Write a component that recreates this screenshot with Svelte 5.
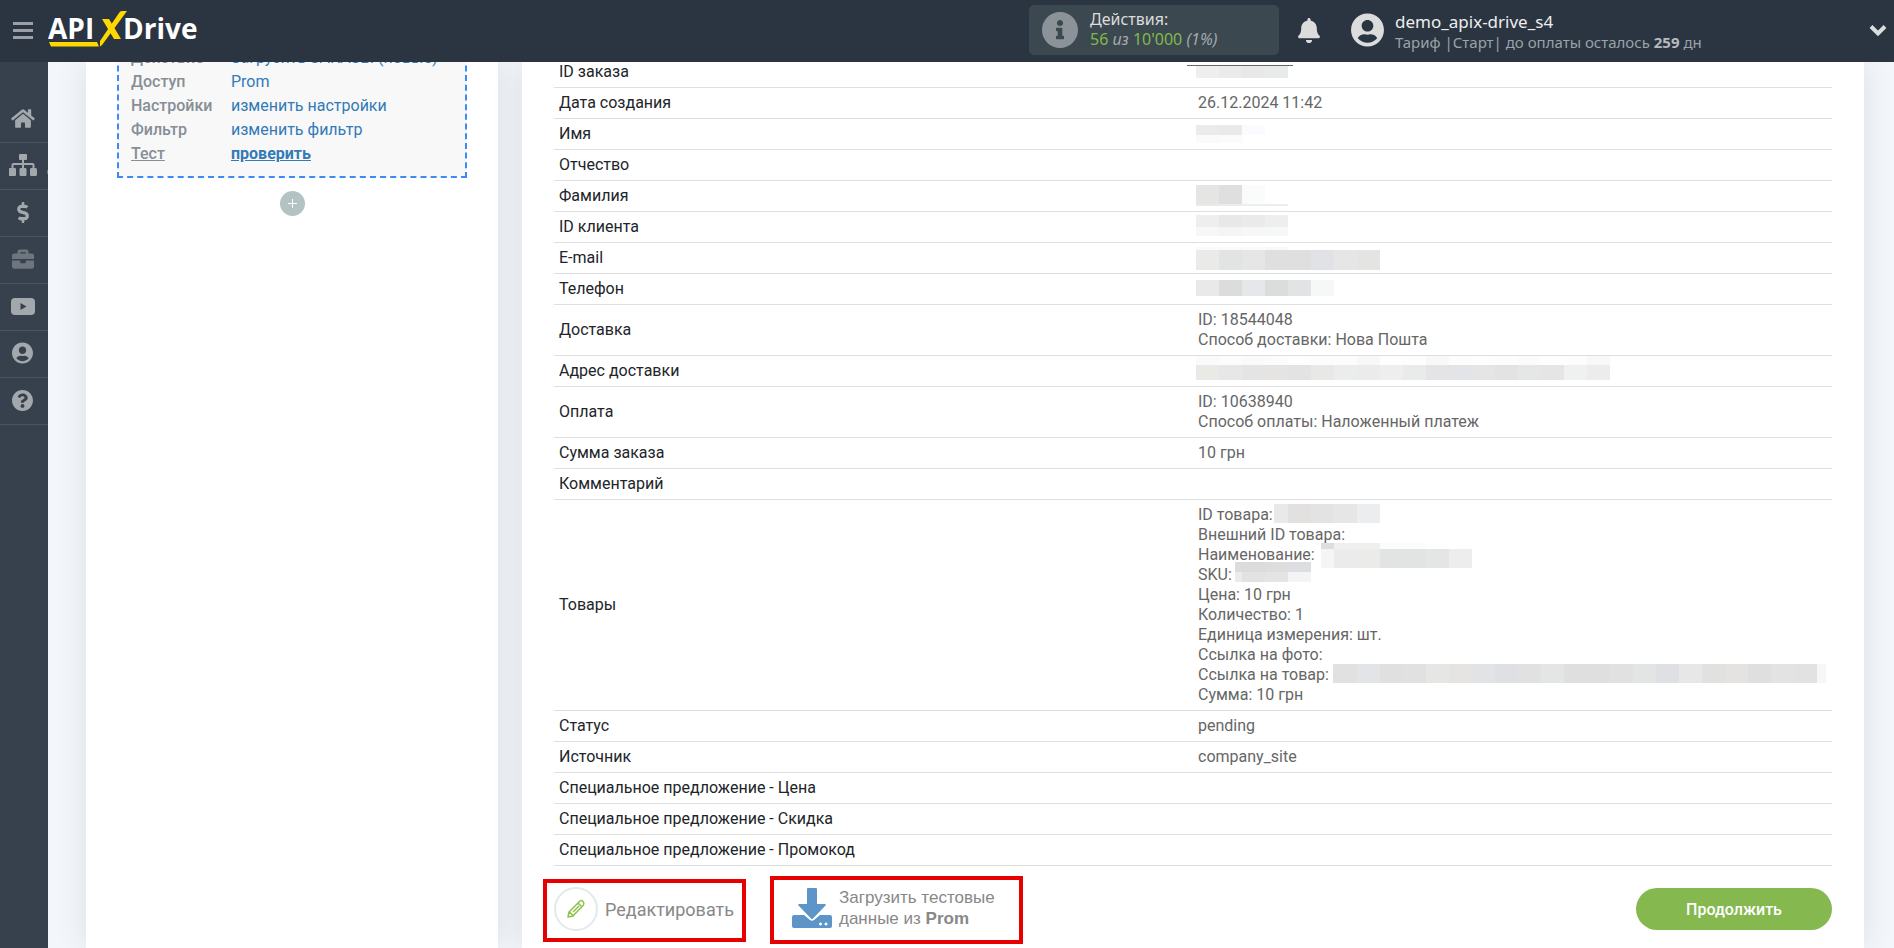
<script>
	const menu = [
		{ title: 'Главная', icon: 'home', w: 24, h: 21 },
		{ title: 'Связи', icon: 'sitemap', w: 28, h: 22, more: true },
		{ title: 'Оплата', icon: 'dollar', w: 12, h: 21 },
		{ title: 'Проекты', icon: 'case', w: 22, h: 22, muted: true },
		{ title: 'Видео', icon: 'video', w: 24, h: 17 },
		{ title: 'Профиль', icon: 'user', w: 21, h: 22 },
		{ title: 'Помощь', icon: 'help', w: 21, h: 21 },
	];

	const icons = {
		home: { box: '0 0 576 512', d: 'M280.37 148.26L96 300.11V464a16 16 0 0 0 16 16l112.06-.29a16 16 0 0 0 15.92-16V368a16 16 0 0 1 16-16h64a16 16 0 0 1 16 16v95.64a16 16 0 0 0 16 16.05L464 480a16 16 0 0 0 16-16V300L295.67 148.26a12.19 12.19 0 0 0-15.3 0zM571.6 251.47L488 182.56V44.05a12 12 0 0 0-12-12h-56a12 12 0 0 0-12 12v72.61L318.47 43a48 48 0 0 0-61 0L4.34 251.47a12 12 0 0 0-1.6 16.9l25.5 31A12 12 0 0 0 45.15 301l235.22-193.74a12.19 12.19 0 0 1 15.3 0L530.9 301a12 12 0 0 0 16.9-1.6l25.5-31a12 12 0 0 0-1.7-16.93z' },
		sitemap: { box: '0 0 28 22', d: 'M11 0h6q1 0 1 1v4q0 1-1 1h-2v3h8.500q2 0 2 2v3h1q1.500 0 1.500 1.500v5q0 1.500-1.500 1.500h-4.500q-1 0-1-1.500v-5q0-1.500 1-1.500h1.500v-3h-8.500v3h1.500q1 0 1 1.500v5q0 1.500-1 1.500h-5q-1 0-1-1.500v-5q0-1.500 1-1.500h1.500v-3h-8.500v3h1.500q1 0 1 1.500v5q0 1.500-1 1.500h-5q-1.500 0-1.500-1.500v-5q0-1.500 1.500-1.500h1.500v-3q0-2 2-2h8.500v-3h-2q-1 0-1-1v-4q0-1 1-1z' },
		dollar: { box: '0 0 288 512', d: 'M209.2 233.4l-108-31.6C88.7 198.2 80 186.5 80 173.5c0-16.3 13.2-29.5 29.5-29.5h66.3c12.2 0 24.2 3.7 34.2 10.5 6.1 4.1 14.3 3.1 19.5-2l34.8-34c7.1-6.9 6.1-18.4-1.8-24.5C238 74.8 207.400 64.100 176 64V16c0-8.800-7.200-16-16-16h-32c-8.800 0-16 7.200-16 16v48h-2.500C45.800 64-5.400 118.700.500 183.600c4.200 46.100 39.400 83.600 83.800 96.600l102.500 30c12.500 3.700 21.200 15.300 21.200 28.300 0 16.300-13.200 29.500-29.500 29.500h-66.300C100 368 88 364.300 78 357.500c-6.100-4.100-14.300-3.100-19.500 2l-34.800 34c-7.100 6.900-6.100 18.400 1.800 24.500 24.500 19.200 55.100 29.900 86.500 30v48c0 8.800 7.200 16 16 16h32c8.800 0 16-7.200 16-16v-48.200c46.600-.9 90.300-28.600 105.700-72.700 21.500-61.600-14.600-124.800-72.500-141.700z' },
		case: { box: '0 0 512 512', d: 'M320 336c0 8.840-7.160 16-16 16h-96c-8.840 0-16-7.160-16-16v-48H0v144c0 25.600 22.400 48 48 48h416c25.600 0 48-22.400 48-48V288H320v48zm144-208h-80V80c0-25.600-22.400-48-48-48H176c-25.600 0-48 22.400-48 48v48H48c-25.600 0-48 22.400-48 48v80h512v-80c0-25.600-22.400-48-48-48zm-144 0H192V96h128v32z' },
		video: { box: '0 0 24 17', d: 'M4 0h16q4 0 4 4v9q0 4-4 4H4q-4 0-4-4V4q0-4 4-4zM9.500 5v7l6-3.500z' },
		user: { box: '0 0 496 512', d: 'M248 8C111 8 0 119 0 256s111 248 248 248 248-111 248-248S385 8 248 8zm0 96c48.600 0 88 39.400 88 88s-39.400 88-88 88-88-39.400-88-88 39.400-88 88-88zm0 344c-58.700 0-111.300-26.600-146.500-68.200 18.800-35.400 55.600-59.800 98.500-59.800 2.400 0 4.800.4 7.100 1.100 13 4.200 26.600 6.900 40.900 6.900 14.300 0 28-2.700 40.900-6.900 2.300-.7 4.700-1.100 7.100-1.100 42.900 0 79.700 24.400 98.500 59.800C359.300 421.400 306.700 448 248 448z' },
		help: { box: '8 8 496 496', d: 'M504 256c0 136.997-111.043 248-248 248S8 392.997 8 256C8 119.083 119.043 8 256 8s248 111.083 248 248zM262.655 90c-54.497 0-89.255 22.957-116.549 63.758-3.536 5.286-2.353 12.415 2.715 16.258l34.699 26.310c5.205 3.947 12.621 3.008 16.665-2.122 17.864-22.658 30.113-35.797 57.303-35.797 20.429 0 45.698 13.148 45.698 32.958 0 14.976-12.363 22.667-32.534 33.976C247.128 238.528 216 254.941 216 296v4c0 6.627 5.373 12 12 12h56c6.627 0 12-5.373 12-12v-1.333c0-28.462 83.186-29.647 83.186-106.667 0-58.002-60.165-102-116.531-102zM256 338c-25.365 0-46 20.635-46 46 0 25.364 20.635 46 46 46s46-20.636 46-46c0-25.365-20.635-46-46-46z' },
		info: { box: '8 8 496 496', d: 'M256 8C119.043 8 8 119.083 8 256c0 136.997 111.043 248 248 248s248-111.003 248-248C504 119.083 392.957 8 256 8zm0 110c23.196 0 42 18.804 42 42s-18.804 42-42 42-42-18.804-42-42 18.804-42 42-42zm56 254c0 6.627-5.373 12-12 12h-88c-6.627 0-12-5.373-12-12v-24c0-6.627 5.373-12 12-12h12v-64h-12c-6.627 0-12-5.373-12-12v-24c0-6.627 5.373-12 12-12h64c6.627 0 12 5.373 12 12v100h12c6.627 0 12 5.373 12 12v24z' },
		bell: { box: '0 0 448 512', d: 'M224 512c35.320 0 63.970-28.650 63.970-64H160.030c0 35.350 28.650 64 63.970 64zm215.390-149.710c-19.320-20.760-55.470-51.990-55.470-154.290 0-77.700-54.480-139.900-127.940-155.160V32c0-17.670-14.320-32-31.980-32s-31.980 14.330-31.980 32v20.840C118.560 68.100 64.080 130.300 64.080 208c0 102.300-36.150 133.530-55.470 154.290-6 6.450-8.660 14.160-8.610 21.710.11 16.400 12.980 32 32.100 32h383.800c19.120 0 32-15.600 32.100-32 .05-7.550-2.610-15.270-8.610-21.710z' },
	};

	const steps = [
		{ name: 'Действие', link: 'Загрузить ЗАКАЗЫ (новые)' },
		{ name: 'Доступ', link: 'Prom' },
		{ name: 'Настройки', link: 'изменить настройки' },
		{ name: 'Фильтр', link: 'изменить фильтр' },
		{ name: 'Тест', link: 'проверить', active: true },
	];

	// hidden values: strips of coloured cells laid over the table cell,
	// a cell is 23px wide unless the strip gives its own first width
	const CELL = 23;

	const rows = [
		{ name: 'ID заказа', hidden: [
			{ x: -6, y: 8, h: 1, first: 106, cells: ['#5d6870'] },
			{ x: 3, y: 9, h: 12, cells: ['#eeeeee', '#ebebe9', '#e8e8e8', '#e9ebea'] },
		] },
		{ name: 'Дата создания', lines: ['26.12.2024 11:42'] },
		{ name: 'Имя', hidden: [
			{ x: 3, y: 6, h: 10, cells: ['#ebebeb', '#e9ebea', '#fafbfe'] },
			{ x: 3, y: 16, h: 8, cells: ['#fafafa', '#fbfbfb'] },
		] },
		{ name: 'Отчество' },
		{ name: 'Фамилия', hidden: [
			{ x: 3, y: 4, h: 19, cells: ['#e5e5e3', '#dfdfdf', '#fafcfb'] },
			{ x: 3, y: 23, h: 2, cells: ['#e9e9e9', '#ececec', '#eeeeee', '#ededed'] },
		] },
		{ name: 'ID клиента', hidden: [
			{ x: 3, y: 3, h: 12, cells: ['#eeeeee', '#e7e9e8', '#eaeaea', '#eeeeee'] },
			{ x: 3, y: 15, h: 9, cells: ['#f7f7f7', '#f5f5f5', '#f7f7f7', '#f6f8f7'] },
		] },
		{ name: 'E-mail', hidden: [
			{ x: 3, y: 4, h: 3, cells: ['#fafafa', '#fafafa', '#fafafa', '#f9f9f9'] },
			{ x: 3, y: 7, h: 20, cells: ['#eaeae8', '#e2e4e3', '#e6e6e6', '#dfdfdf', '#dfdfdf', '#e0e2e5', '#e6e6e6', '#e4e4e2'] },
		] },
		{ name: 'Телефон', hidden: [
			{ x: 3, y: 6, h: 16, cells: ['#e9e9e9', '#dbdddc', '#e5e7ea', '#dbdddc', '#e1e3e5', '#f6f8f7'] },
		] },
		{ name: 'Доставка', lines: ['ID: 18544048', 'Способ доставки: Нова Пошта'] },
		{ name: 'Адрес доставки', hidden: [
			{ x: 3, y: 0, h: 9, cells: ['#fafafa', '#fcfcfc', '#fafafa', '#fcfcfc', '#fefefe', '#fcfcfc', '#fcfcfc', '#f8f8f8', '#fefefe', '#fdfdfd', '#f8f8f8', '#fdfdfd', '#fefefe', '#fdfdfd', '#fbfbfb', '#fefefe', '#fdfdfd', '#f8f8f8'] },
			{ x: 3, y: 9, h: 15, cells: ['#e9e9e6', '#e7e7e7', '#e4e4e4', '#e5e4e2', '#e3e3e3', '#e8e8e6', '#ebedec', '#ebebeb', '#eeeeee', '#e9ebea', '#e4e4e6', '#e3e4e8', '#e5e5e5', '#e3e3e3', '#e5e7e6', '#e5e5e5', '#eff1f0', '#ececec'] },
		] },
		{ name: 'Оплата', lines: ['ID: 10638940', 'Способ оплаты: Наложенный платеж'] },
		{ name: 'Сумма заказа', lines: ['10 грн'] },
		{ name: 'Комментарий' },
		{
			name: 'Товары',
			lines: ['ID товара:', 'Внешний ID товара:', 'Наименование:', 'SKU:', 'Цена: 10 грн', 'Количество: 1', 'Единица измерения: шт.', 'Ссылка на фото:', 'Ссылка на товар:', 'Сумма: 10 грн'],
			hidden: [
				{ x: 81, y: 4, h: 19, first: 14, cells: ['#e9e9ea', '#e2e1df', '#e3e3e3', '#e6e6e6', '#ecedef'] },
				{ x: 128, y: 43, h: 6, first: 13, cells: ['#dcdfde', '#eef0ef', '#eef0ef', '#fcfcfc', '#fcfcfc'] },
				{ x: 128, y: 49, h: 19, first: 13, cells: ['#f5f5f5', '#ebebeb', '#ebebe9', '#e2e4e3', '#e2e4e3', '#e4e6e5', '#ededed'] },
				{ x: 42, y: 62, h: 10, first: 7, cells: ['#dcdcdc', '#dbdbdc', '#dddddd', '#dddee1'] },
				{ x: 42, y: 72, h: 10, first: 7, cells: ['#ebebeb', '#e2e2e2', '#e4e4e4', '#f4f4f4'] },
				{ x: 140, y: 164, h: 19, first: 24, cells: ['#e1e1df', '#e2e4e7', '#e0e0e0', '#e1e1e1', '#e6e6e4', '#e5e4e2', '#e2e3e5', '#dee0e3', '#e1e1e2', '#e3e6e5', '#dfdfdf', '#dfdfdf', '#e1e1e1', '#e3e5e5', '#dee0e3', '#e7e7e7', '#e1e1df', '#e4e3e1', '#dfdfdf', '#e3e3e4', '#e2e2e2'] },
				{ x: 624, y: 164, h: 19, first: 9, cells: ['#f5f6f8'] },
			],
		},
		{ name: 'Статус', lines: ['pending'] },
		{ name: 'Источник', lines: ['company_site'] },
		{ name: 'Специальное предложение - Цена' },
		{ name: 'Специальное предложение - Скидка' },
		{ name: 'Специальное предложение - Промокод' },
	];
</script>

{#snippet icon(name, w, h)}
	<svg width={w} height={h} viewBox={icons[name].box} fill="currentColor" fill-rule="evenodd" aria-hidden="true">
		<path d={icons[name].d} />
	</svg>
{/snippet}

<div class="app">
	<header>
		<button class="burger" aria-label="Меню">
			<svg width="20" height="17" viewBox="0 0 20 17" fill="currentColor">
				<path d="M0 0h20v3H0zM0 7h20v3H0zM0 14h20v3H0z" />
			</svg>
		</button>
		<a class="logo" href="#home" aria-label="APIXDrive">
			<svg width="156" height="40" viewBox="0 0 156 40">
				<text x="0" y="29" class="logo-text">API</text>
				<text x="75" y="29" class="logo-text">Drive</text>
				<path d="M54 9h7l12 20h-7z" fill="#ffd800" />
				<path d="M71 3q1-2 3-2h5L54 35l-2 1.500V31z" fill="#ffd800" />
				<path d="M1 32h48l2 4.500H3z" fill="#ffd800" />
			</svg>
		</a>
		<div class="actions">
			{@render icon('info', 36, 36)}
			<div class="actions-text">
				<div>Действия:</div>
				<div class="actions-count"><b>56</b> <i>из</i> <b>10'000</b> <i>(1%)</i></div>
			</div>
		</div>
		<button class="bell" aria-label="Уведомления">{@render icon('bell', 22, 25)}</button>
		<div class="user">
			{@render icon('user', 33, 34)}
			<div class="user-text">
				<div class="user-name">demo_apix-drive_s4</div>
				<div class="user-plan">Тариф |Старт| до оплаты осталось <b>259</b> дн</div>
			</div>
		</div>
		<button class="chevron" aria-label="Открыть меню профиля">
			<svg width="18" height="13" viewBox="0 0 18 13" fill="none" stroke="currentColor" stroke-width="4">
				<path d="M2 2.500l7 7 7-7" />
			</svg>
		</button>
	</header>

	<div class="body">
		<nav>
			{#each menu as item}
				<a href="#{item.icon}" aria-label={item.title} class:muted={item.muted} class:more={item.more}>
					{@render icon(item.icon, item.w, item.h)}
				</a>
			{/each}
		</nav>

		<main>
			<section class="panel side">
				<div class="source">
					{#each steps as step}
						<div class="step" class:active={step.active}>
							<span class="step-name"><span>{step.name}</span></span>
							<a href="#step">{step.link}</a>
						</div>
					{/each}
				</div>
				<button class="plus" aria-label="Добавить">
					<svg width="9" height="9" viewBox="0 0 9 9" stroke="currentColor"><path d="M4.500 0v9M0 4.500h9" /></svg>
				</button>
			</section>

			<section class="panel order">
				<table>
					<tbody>
						{#each rows as row}
							<tr>
								<th scope="row">{row.name}</th>
								<td>
									{#each row.lines ?? [] as line}
										<div>{line}</div>
									{/each}
									{#each row.hidden ?? [] as strip}
										<div class="strip" style="left: {strip.x}px; top: {strip.y}px; height: {strip.h}px">
											{#each strip.cells as color, i}
												<i style="width: {i === 0 && strip.first ? strip.first : CELL}px; background: {color}"></i>
											{/each}
										</div>
									{/each}
								</td>
							</tr>
						{/each}
					</tbody>
				</table>

				<div class="footer">
					<button class="edit">
						<span class="round">
							<svg width="20" height="20" viewBox="0 0 20 20" fill="none" stroke="#8bc34a" stroke-width="1.500" stroke-linejoin="round">
								<path d="M2 18l1-5L14 2q1.500-1 3 .5t.5 3.500L7 17zM12 4l4 4M3.500 13l3.500 3.500M7 13l6-6" />
							</svg>
						</span>
						Редактировать
					</button>
					<button class="load">
						<svg width="40" height="40" viewBox="0 0 40 40" fill="#5e95c9">
							<path d="M16 0h8q1 0 1 1v15h8q1.500 0 .5 1.500L21 30.500q-1 1-2 0L6.500 17.500q-1-1.500.5-1.500h8V1q0-1 1-1z" />
							<path fill-rule="evenodd" d="M2 27h10l6 5q2 1.500 4 0l6-5h10q2 0 2 2v9q0 2-2 2H2q-2 0-2-2v-9q0-2 2-2zM28.500 34.500a1.500 1.500 0 1 0 .01 0zM34 34.500a1.500 1.500 0 1 0 .01 0z" />
						</svg>
						<span>Загрузить тестовые<br />данные из <b>Prom</b></span>
					</button>
					<button class="next">Продолжить</button>
				</div>
			</section>
		</main>
	</div>
</div>

<style>
	* {
		box-sizing: border-box;
	}

	:global(body) {
		margin: 0;
		background: #f3f6fb;
	}

	button {
		margin: 0;
		padding: 0;
		border: none;
		background: none;
		font-family: inherit;
		color: inherit;
		cursor: pointer;
	}

	svg {
		display: block;
		flex: none;
	}

	.app {
		display: flex;
		flex-direction: column;
		min-height: 100vh;
		font-family: Roboto, 'Liberation Sans', sans-serif;
		font-size: 16px;
		line-height: 20px;
	}

	header {
		display: flex;
		align-items: center;
		height: 62px;
		padding: 0 7px 2px 13px;
		background: #2a3541;
		color: #dcdcdc;
		font-family: 'Noto Sans', 'Open Sans', sans-serif;
	}

	.burger {
		color: #9aa0a6;
	}

	.logo {
		margin: 0 auto 0 15px;
	}

	.logo-text {
		font: 700 28px 'Open Sans', sans-serif;
		fill: #fff;
	}

	.actions {
		display: flex;
		align-items: center;
		gap: 12px;
		width: 250px;
		height: 50px;
		margin-right: 19px;
		padding: 0 13px;
		border-radius: 5px;
		background: #3b4850;
	}

	.actions svg {
		color: #8b9298;
	}

	.actions-text {
		padding-bottom: 2px;
	}

	.actions-count {
		color: #a4a9ad;
	}

	.actions-count b {
		font-weight: 400;
		color: #82b94b;
	}

	.bell {
		margin-right: 31px;
	}

	.user {
		display: flex;
		align-items: center;
		gap: 11px;
		flex: 0 1 518px;
	}

	.user-text {
		padding-top: 4px;
	}

	.user-name {
		font-size: 17px;
		line-height: 20px;
		color: #eee;
	}

	.user-plan {
		font-size: 15px;
		line-height: 20px;
		color: #9ba2a9;
	}

	.user-plan b {
		color: #b4babf;
	}

	.body {
		display: flex;
		flex: 1;
	}

	nav {
		flex: none;
		width: 48px;
		padding-top: 34px;
		background: #36414d;
	}

	nav a {
		position: relative;
		display: flex;
		align-items: center;
		justify-content: center;
		height: 47px;
		padding: 0 3px 2px 0;
		border-bottom: 1px solid #4a5561;
		color: #a3a8ac;
	}

	nav a.muted {
		color: #6d767f;
	}

	nav a.more::after {
		content: '';
		position: absolute;
		right: 0;
		top: 27px;
		width: 1px;
		height: 4px;
		background: #6d767f;
	}

	main {
		flex: 1;
		display: grid;
		grid-template-columns: minmax(0, 412fr) minmax(0, 1342fr);
		gap: 24px;
		padding: 0 30px 0 38px;
		overflow: hidden;
	}

	.panel {
		background: #fff;
		box-shadow: 0 0 30px rgba(0, 0, 0, 0.1);
	}

	.side {
		padding: 0 31px;
	}

	.source {
		margin-top: -16px;
		padding: 0 12px 10px;
		border: 2px dashed #3d8af7;
		border-top: none;
		background: #f8f8f8;
	}

	.step {
		display: flex;
		line-height: 24px;
		white-space: nowrap;
	}

	.step-name {
		width: 100px;
		font-weight: 500;
		color: #868e96;
	}

	.step a {
		color: #337ab7;
		text-decoration: none;
	}

	.step.active .step-name span,
	.step.active a {
		text-decoration: underline;
	}

	.step.active a {
		font-weight: 700;
	}

	.plus {
		display: flex;
		align-items: center;
		justify-content: center;
		width: 25px;
		height: 25px;
		margin: 13px auto 0;
		border-radius: 50%;
		background: #b3c2c2;
		color: #fff;
	}

	.order {
		padding: 0 32px 4px;
	}

	table {
		width: 100%;
		margin-top: -5px;
		border-collapse: separate;
		border-spacing: 0;
		table-layout: fixed;
	}

	th,
	td {
		position: relative;
		padding: 5px;
		height: 31px;
		border-bottom: 1px solid #dfdfdf;
		text-align: left;
		font-weight: 400;
		color: #212529;
	}

	td {
		color: #666;
	}

	.strip {
		position: absolute;
		display: flex;
	}

	.footer {
		display: flex;
		align-items: center;
		margin-left: -11px;
		padding-top: 10px;
	}

	.edit,
	.load {
		display: flex;
		align-items: center;
		gap: 7px;
		border: 4px solid #e60000;
		font-size: 18px;
		line-height: 21px;
		text-align: left;
		color: #888;
	}

	.edit {
		width: 203px;
		height: 63px;
		padding: 0 0 2px 7px;
	}

	.round {
		display: flex;
		align-items: center;
		justify-content: center;
		width: 44px;
		height: 44px;
		border: 2px solid #e0eaea;
		border-radius: 50%;
	}

	.load {
		width: 253px;
		height: 68px;
		margin-left: 24px;
		padding: 0 0 4px 18px;
		font-family: 'Liberation Sans', sans-serif;
		font-size: 17px;
	}

	.next {
		width: 196px;
		height: 42px;
		margin: 0 0 2px auto;
		border-radius: 21px;
		background: #86b850;
		color: #fff;
		font-size: 16px;
		font-weight: 500;
	}
</style>
